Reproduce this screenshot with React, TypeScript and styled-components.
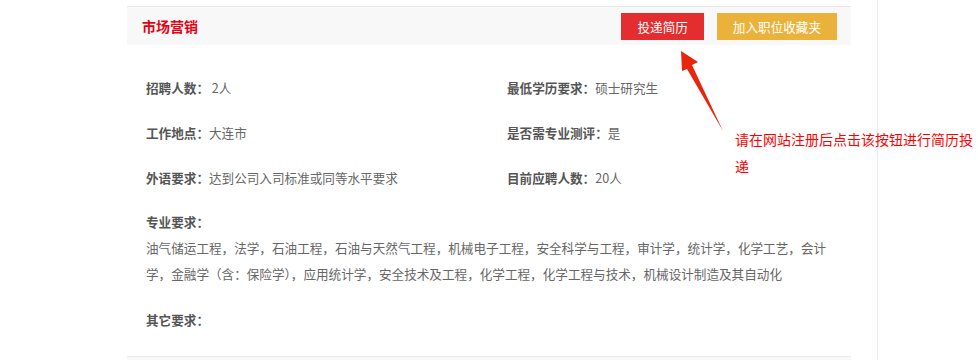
import React from "react";
import styled, { createGlobalStyle } from "styled-components";

const GlobalStyle = createGlobalStyle`
  body {
    margin: 0;
    background: #fff;
    font-family: "Noto Sans CJK SC", "Noto Sans", sans-serif;
  }
`;

const Page = styled.div`
  position: relative;
  width: 978px;
  height: 360px;
  overflow: hidden;
  display: flex;
`;

const MainColumn = styled.div`
  width: 878px;
  height: 100%;
  border-right: 1px solid #ececec;
  padding-top: 6px;
  box-sizing: border-box;
`;

const Panel = styled.div`
  margin-left: 127px;
  width: 724px;
  border-top: 1px solid #e8e8e8;
`;

const Header = styled.div`
  display: flex;
  align-items: center;
  height: 38px;
  padding: 0 14px 0 15px;
  background: #f8f8f8;
`;

const Title = styled.div`
  flex: 1;
  font-size: 14px;
  font-weight: bold;
  color: #e60012;
`;

const Button = styled.button<{ $tone: "red" | "gold" }>`
  height: 27px;
  padding: 0 16px;
  margin-left: 13px;
  border: none;
  font-family: inherit;
  font-size: 12.6px;
  color: #fff;
  background: ${(p) => (p.$tone === "red" ? "#e32d2f" : "#ebb23b")};
  cursor: pointer;
`;

const Body = styled.div`
  padding: 20px 19px 23px;
  font-size: 12.6px;
`;

const InfoGrid = styled.div`
  display: grid;
  grid-template-columns: 361px 1fr;
  grid-auto-rows: 45px;
  align-items: center;
`;

const Label = styled.span`
  font-weight: bold;
  color: #555;
`;

const Value = styled.span`
  color: #666;
`;

const Block = styled.div<{ $gap: number }>`
  margin-top: ${(p) => p.$gap}px;
  line-height: 26px;
`;

const Paragraph = styled.div`
  color: #666;
  line-height: 26px;
`;

const Bottom = styled.div`
  border-top: 1px solid #ececec;
  background: #f8f8f8;
  height: 10px;
`;

const Note = styled.div`
  position: absolute;
  left: 735px;
  top: 126px;
  width: 240px;
  font-size: 14px;
  line-height: 27px;
  color: #ff0000;
`;

const Arrow = styled.svg`
  position: absolute;
  left: 0;
  top: 0;
  pointer-events: none;
`;

const info: [string, string][] = [
  ["招聘人数：", " 2人"],
  ["最低学历要求：", "硕士研究生"],
  ["工作地点：", "大连市"],
  ["是否需专业测评：", "是"],
  ["外语要求：", "达到公司入司标准或同等水平要求"],
  ["目前应聘人数：", "20人"],
];

export default function App() {
  return (
    <Page>
      <GlobalStyle />
      <MainColumn>
        <Panel>
          <Header>
            <Title>市场营销</Title>
            <Button $tone="red">投递简历</Button>
            <Button $tone="gold">加入职位收藏夹</Button>
          </Header>
          <Body>
            <InfoGrid>
              {info.map(([k, v]) => (
                <div key={k}>
                  <Label>{k}</Label>
                  <Value>{v}</Value>
                </div>
              ))}
            </InfoGrid>
            <Block $gap={9}>
              <Label>专业要求：</Label>
              <Paragraph>
                油气储运工程，法学，石油工程，石油与天然气工程，机械电子工程，安全科学与工程，审计学，统计学，化学工艺，会计学，金融学（含：保险学），应用统计学，安全技术及工程，化学工程，化学工程与技术，机械设计制造及其自动化
              </Paragraph>
            </Block>
            <Block $gap={20}>
              <Label>其它要求：</Label>
            </Block>
          </Body>
          <Bottom />
        </Panel>
      </MainColumn>
      <Arrow width="978" height="360" viewBox="0 0 978 360">
        <polygon
          points="681,51 698,62 692,65 723,131 687,69 682,71"
          fill="#e8260e"
        />
      </Arrow>
      <Note>请在网站注册后点击该按钮进行简历投递</Note>
    </Page>
  );
}
